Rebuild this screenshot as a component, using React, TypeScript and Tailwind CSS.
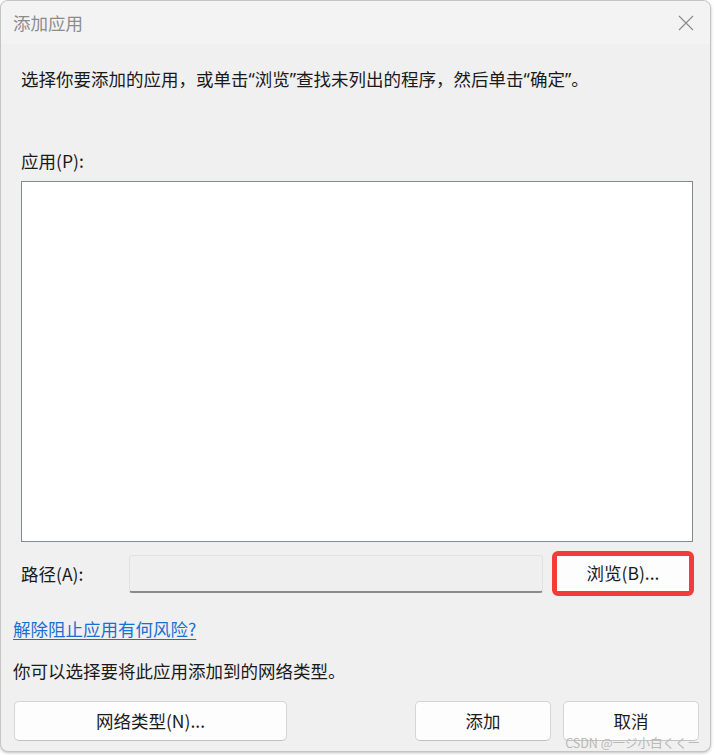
import React from "react";

// Windows "添加应用" dialog (firewall allowed apps)

const font = {
  fontFamily: '"Noto Sans CJK SC", "Noto Sans", sans-serif',
};

function CloseIcon() {
  return (
    <svg viewBox="0 0 16 16" className="h-[16px] w-[16px]" fill="none" stroke="#8a8a8a" strokeWidth="1.1">
      <path d="M1 1l14 14M15 1L1 15" />
    </svg>
  );
}

// narrow latin quote marks, like the Windows UI font draws them
function Q({ c }: { c: string }) {
  return <span className="font-['Noto_Sans']">{c}</span>;
}

function DialogButton({ label, className = "" }: { label: string; className?: string }) {
  return (
    <button
      type="button"
      className={`flex h-[40px] items-center justify-center rounded-[5px] border border-[#d5d5d5] border-b-[#c2c2c2] bg-[#fdfdfd] text-[17.5px] text-[#1b1b1b] ${className}`}
    >
      {label}
    </button>
  );
}

export default function App() {
  return (
    <div className="relative h-[755px] w-[714px] overflow-hidden bg-white" style={font}>
      <div className="flex h-[752px] w-[711px] flex-col overflow-hidden rounded-[8px] border border-[#c4c4c4] bg-[#f0f0f0] shadow-[0_1px_3px_rgba(0,0,0,0.25)]">
        {/* title bar */}
        <div className="flex h-[43px] shrink-0 items-center justify-between bg-[#f3f3f3] pl-[12px] pr-[16px]">
          <span className="text-[17.5px] leading-[24px] text-[#8c8c8c]">添加应用</span>
          <CloseIcon />
        </div>

        <div className="flex flex-col px-[20px]">
          <p className="mt-[23px] text-[17.5px] leading-[24px] text-[#1a1a1a]">
            选择你要添加的应用，或单击<Q c="“" />浏览<Q c="”" />查找未列出的程序，然后单击<Q c="“" />确定<Q c="”" />。
          </p>
          <p className="mt-[58px] text-[17.5px] leading-[24px] text-[#1a1a1a]">应用(P):</p>
          <div className="mt-[8px] h-[361px] w-[672px] shrink-0 border border-[#858991] bg-white" />

          <div className="mt-[9px] flex items-center">
            <span className="w-[108px] shrink-0 text-[17.5px] leading-[24px] text-[#1a1a1a]">路径(A):</span>
            <div className="h-[38px] w-[414px] shrink-0 rounded-[3px] border border-[#e2e2e2] border-b-2 border-b-[#8a8a8a] bg-[#efefef]" />
            <div className="ml-[9px] shrink-0 rounded-[6px] border-[5px] border-[#f23b3b]">
              <button
                type="button"
                className="flex h-[35px] w-[132px] items-center justify-center bg-[#fdfdfd] text-[17.5px] text-[#1b1b1b]"
              >
                浏览(B)...
              </button>
            </div>
          </div>
        </div>

        <div className="flex flex-col pl-[12px] pr-[11px]">
          <a href="#" className="mt-[21px] text-[17.5px] leading-[24px] text-[#1a6fd4] underline underline-offset-[3px]">
            解除阻止应用有何风险?
          </a>
          <p className="mt-[18px] text-[17.5px] leading-[24px] text-[#1a1a1a]">你可以选择要将此应用添加到的网络类型。</p>
          <div className="mt-[18px] flex items-center">
            <DialogButton label="网络类型(N)..." className="ml-[1px] w-[273px]" />
            <DialogButton label="添加" className="ml-auto w-[136px]" />
            <DialogButton label="取消" className="ml-[12px] w-[136px]" />
          </div>
        </div>
      </div>

      <span className="absolute bottom-[5px] right-[14px] text-[12.5px] leading-[14px] text-[#b9b9b9]">
        CSDN @一ジ小白くくー
      </span>
    </div>
  );
}
